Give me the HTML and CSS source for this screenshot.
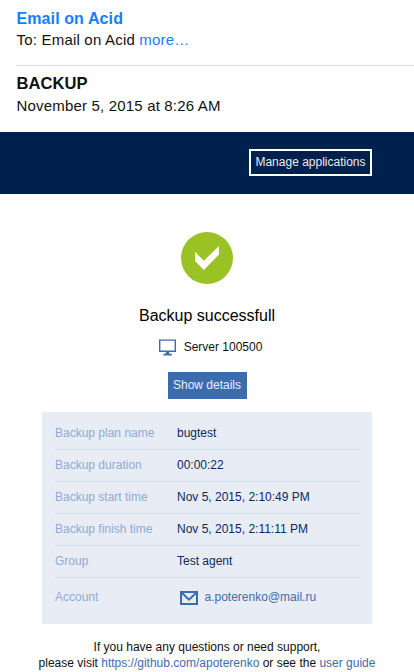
FILE: index.html
```html
<!DOCTYPE html>
<html lang="en">
<head>
<meta charset="utf-8">
<title>BACKUP</title>
<link rel="stylesheet" href="styles.css">
</head>
<body>
<header class="mail-head">
  <div class="sender">Email on Acid</div>
  <div class="recipient">To: Email on Acid <a>more…</a></div>
  <div class="subject">BACKUP</div>
  <div class="date">November 5, 2015 at 8:26 AM</div>
</header>
<nav class="banner"><a class="manage">Manage applications</a></nav>
<main>
  <svg class="check" viewBox="0 0 52 52"><circle cx="26" cy="26" r="26" fill="#9bc224"/><path d="M14 19.8 22.8 28.8 38 14V22.6L22.8 38 14 29Z" fill="#fff"/></svg>
  <h1>Backup successfull</h1>
  <div class="server">
    <svg class="monitor" viewBox="0 0 17 17"><path d="M.7 1.1H16.3V12.3H.7Z" fill="#fff" stroke="#3d6cae" stroke-width="1.4"/><path d="M6.8 12.5h3.4V14.8h2.6V16.5H4.4V14.8H6.8Z" fill="#3d6cae"/></svg>
    <span class="server-name">Server 100500</span>
  </div>
  <a class="details-button">Show details</a>
  <dl class="details">
    <div class="row"><dt>Backup plan name</dt><dd>bugtest</dd></div>
    <div class="row"><dt>Backup duration</dt><dd>00:00:22</dd></div>
    <div class="row"><dt>Backup start time</dt><dd>Nov 5, 2015, 2:10:49 PM</dd></div>
    <div class="row"><dt>Backup finish time</dt><dd>Nov 5, 2015, 2:11:11 PM</dd></div>
    <div class="row"><dt>Group</dt><dd>Test agent</dd></div>
    <div class="row account"><dt>Account</dt><dd><svg class="envelope" viewBox="0 0 18 14"><path d="M1 1H17V13H1Z" fill="#e7ecf5" stroke="#3d6cae" stroke-width="2"/><path d="M2 2 9 8.7 16 2" fill="none" stroke="#3d6cae" stroke-width="2"/></svg><a>a.poterenko@mail.ru</a></dd></div>
  </dl>
</main>
<footer>If you have any questions or need support,<br>please visit <a>https://github.com/apoterenko</a> or see the <a>user guide</a></footer>
</body>
</html>
```

FILE: styles.css
```css
body {
  margin: 0;
  height: 672px;
  overflow: hidden;
  background: #fff;
  color: #111;
  font: 12px/16px "Liberation Sans", Arial, sans-serif;
}
.mail-head { height: 132px; padding-left: 16.5px; box-sizing: border-box; white-space: nowrap; }
.sender { padding-top: 9px; font-size: 16px; line-height: 20px; font-weight: bold; letter-spacing: .1px; color: #147efb; }
.recipient { height: 36px; border-bottom: 1px solid #dcdcde; font-size: 15px; line-height: 22px; letter-spacing: .2px; }
.recipient a { color: #147efb; }
.subject { padding-top: 7px; font-size: 16.6px; line-height: 21px; font-weight: bold; }
.date { font-size: 15px; line-height: 24px; letter-spacing: .18px; }
.banner { height: 62px; padding: 17px 42px 0 0; box-sizing: border-box; background: #00204d; display: flex; justify-content: flex-end; align-items: flex-start; }
.manage { width: 123px; height: 27px; box-sizing: border-box; border: 2px solid #fff; color: #e9edf3; line-height: 23px; text-align: center; white-space: nowrap; }
main { display: flex; flex-direction: column; align-items: center; padding-top: 38px; }
.check { width: 52px; height: 52px; }
h1 { margin: 21px 0 0; font-size: 16px; line-height: 22px; font-weight: normal; color: #000; }
.server { display: flex; align-items: flex-start; height: 17px; margin-top: 12px; gap: 8px; padding-left: 7px; }
.server-name { line-height: 17px; }
.monitor { width: 17px; height: 17px; }
.details-button { width: 79px; height: 27px; margin-top: 16px; margin-bottom: 13px; background: #3d6cae; color: #e9eef6; line-height: 26px; text-align: center; }
.details { width: 305px; height: 212px; margin: 0; padding: 0 12px 0 13px; background: #e7ecf5; }
.row { display: flex; height: 31px; line-height: 31px; border-bottom: 1px solid #cfdbeb; }
.row:first-child { height: 37px; line-height: 43px; }
.row.account { height: 39px; line-height: 39px; border: 0; }
dt { width: 122px; color: #8eabd5; }
dd { margin: 0; color: #0c2a5b; display: flex; align-items: center; }
.row:first-child dd { align-items: flex-start; }
.envelope { width: 18px; height: 14px; margin: 1px 7px 0 2.5px; }
.account a { color: #3d6cae; }
footer { margin-top: 15px; text-align: center; white-space: nowrap; }
footer a { color: #3d6cae; }
```
